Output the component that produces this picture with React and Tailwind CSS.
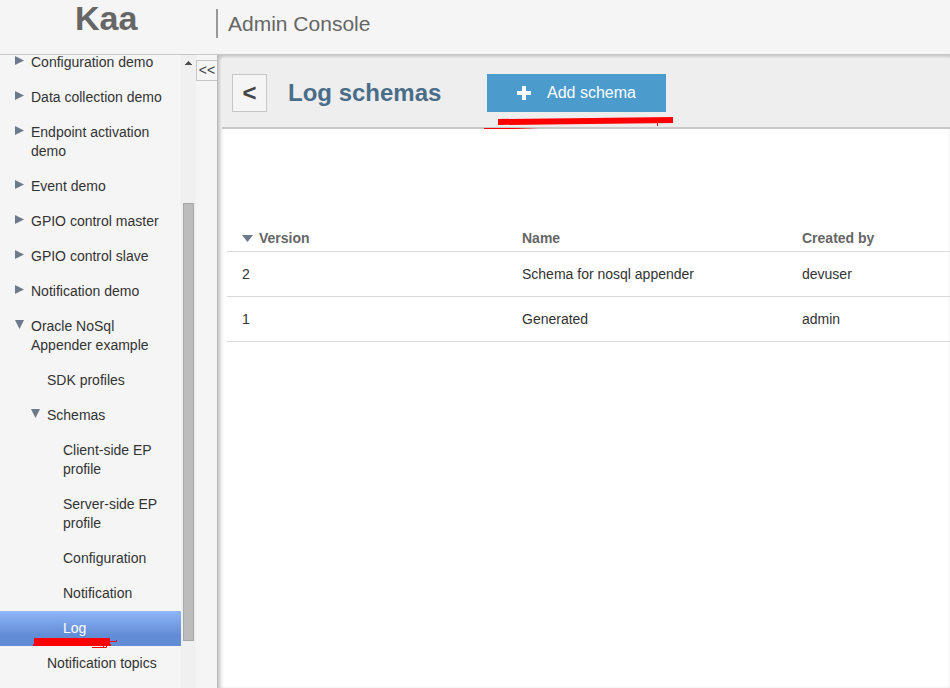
import React from "react";

const NAV = [
  { label: "Configuration demo", level: 0, arrow: "right" },
  { label: "Data collection demo", level: 0, arrow: "right" },
  { label: "Endpoint activation demo", level: 0, arrow: "right" },
  { label: "Event demo", level: 0, arrow: "right" },
  { label: "GPIO control master", level: 0, arrow: "right" },
  { label: "GPIO control slave", level: 0, arrow: "right" },
  { label: "Notification demo", level: 0, arrow: "right" },
  { label: "Oracle NoSql Appender example", level: 0, arrow: "down" },
  { label: "SDK profiles", level: 1 },
  { label: "Schemas", level: 1, arrow: "down" },
  { label: "Client-side EP profile", level: 2 },
  { label: "Server-side EP profile", level: 2 },
  { label: "Configuration", level: 2 },
  { label: "Notification", level: 2 },
  { label: "Log", level: 2, selected: true },
  { label: "Notification topics", level: 1 },
];

const INDENT = ["pl-[15px]", "pl-[31px]", "pl-[47px]"];

const SCHEMAS = [
  { version: 2, name: "Schema for nosql appender", author: "devuser" },
  { version: 1, name: "Generated", author: "admin" },
];

function Arrow({ direction }) {
  return (
    <svg className="block h-[9px] w-[9px]" viewBox="0 0 9 9" aria-hidden="true">
      <path d={direction === "down" ? "M0 0H9L4.5 9Z" : "M0 0L9 4.5L0 9Z"} fill="#6d7a8c" />
    </svg>
  );
}

function NavItem({ item }) {
  return (
    <li>
      <a
        href="#"
        aria-current={item.selected ? "page" : undefined}
        className={`relative flex items-start py-2 pr-4 ${INDENT[item.level]} ${
          item.selected
            ? "bg-linear-to-b from-[#8fb6f7] via-[#628cd5] via-70% to-[#628cd5] text-white"
            : "text-[#333]"
        }`}
      >
        <span className="w-4 shrink-0 pt-[3px]">
          {item.arrow && <Arrow direction={item.arrow} />}
        </span>
        <span>{item.label}</span>
        {item.selected && (
          <svg
            className="pointer-events-none absolute top-[26px] left-8 z-10 h-3 w-[88px]"
            viewBox="0 0 88 12"
            aria-hidden="true"
          >
            <path d="M2 1H78V7H79V9H1V7H2Z" fill="#f00" />
            <path d="M78 4.500H84.500V3M60 10.500H74.500V8M71.500 8V10" fill="none" stroke="#f00" />
          </svg>
        )}
      </a>
    </li>
  );
}

function Sidebar() {
  return (
    <aside className="flex shrink-0">
      <nav aria-label="Projects" className="w-[181px] overflow-hidden">
        <ul className="-mt-[10px] leading-[19px]">
          {NAV.map((item) => (
            <NavItem key={item.label} item={item} />
          ))}
        </ul>
      </nav>
      <div className="flex w-[15px] flex-col items-center bg-[#f0f0f0] pt-[6px] pb-[47px]">
        <svg className="h-1 w-[7px] shrink-0" viewBox="0 0 7 4" aria-hidden="true">
          <path d="M3 0H4V1H5V2H6V3H7V4H0V3H1V2H2V1H3Z" fill="#505050" />
        </svg>
        <div className="mt-[138px] w-[11px] flex-1 border border-[#a8a8a8] bg-[#bcbcbc]" />
      </div>
      <div className="w-[21px] pt-[5px]">
        <button
          type="button"
          aria-label="Collapse navigation"
          className="block h-[21px] w-full border border-r-0 border-[#c7c7c7] text-center leading-[19px] text-[#444]"
        >
          &lt;&lt;
        </button>
      </div>
    </aside>
  );
}

function Toolbar() {
  return (
    <div className="relative flex items-center border-b-2 border-[#c8c8c8] bg-[#eee] px-[10px] py-[15px]">
      <button
        type="button"
        aria-label="Back"
        className="h-[38px] w-[35px] border border-[#c7c7c7] bg-[#f5f5f5] text-2xl font-bold text-[#444]"
      >
        &lt;
      </button>
      <h1 className="ml-[21px] w-[199px] text-2xl font-bold text-[#496d89]">Log schemas</h1>
      <button
        type="button"
        className="flex h-[38px] w-[179px] items-center bg-[#4b9bcd] pl-[30px] text-base text-white"
      >
        <svg className="mr-4 h-[14px] w-[14px]" viewBox="0 0 14 14" aria-hidden="true">
          <path d="M5 0H9V5H14V9H9V14H5V9H0V5H5Z" fill="#fff" />
        </svg>
        Add schema
      </button>
      <svg
        className="pointer-events-none absolute top-[58px] left-[262px] h-[13px] w-[190px]"
        viewBox="0 0 190 13"
        aria-hidden="true"
      >
        <path d="M14 2L189 0V6L105 7L14 8Z" fill="#f00" />
        <path d="M173.500 6V9" stroke="#f00" />
        <path d="M0 11H30L55 11.500L30 12H0Z" fill="#f00" />
      </svg>
    </div>
  );
}

function SchemaTable() {
  return (
    <table className="w-full table-fixed border-collapse text-left text-[#333]">
      <thead>
        <tr className="h-7 border-b border-[#d9d9d9] text-[#666]">
          <th scope="col" className="w-[280px] px-[15px] pt-1 font-bold">
            <span className="flex items-center gap-[6px]">
              <svg className="h-[7px] w-[11px]" viewBox="0 0 11 7" aria-hidden="true">
                <path d="M0 0H11L5.500 7Z" fill="#6d7a8c" />
              </svg>
              Version
            </span>
          </th>
          <th scope="col" className="w-[280px] px-[15px] pt-1 font-bold">Name</th>
          <th scope="col" className="px-[15px] pt-1 font-bold">Created by</th>
        </tr>
      </thead>
      <tbody>
        {SCHEMAS.map((row) => (
          <tr key={row.version} className="h-[45px] border-b border-[#d9d9d9]">
            <td className="px-[15px] pt-0.5">{row.version}</td>
            <td className="px-[15px] pt-0.5">{row.name}</td>
            <td className="px-[15px] pt-0.5">{row.author}</td>
          </tr>
        ))}
      </tbody>
    </table>
  );
}

export default function App() {
  return (
    <div className="flex h-screen flex-col overflow-hidden bg-[#f5f5f5] font-['Liberation_Sans',Arial,sans-serif] text-[14px] leading-[19px]">
      <header className="flex h-[55px] shrink-0 items-start border-b border-[#c7c7c7] text-[#666]">
        <div className="w-[216px] pl-[75px] text-[34px] leading-[36px] font-bold">Kaa</div>
        <div className="mt-[9px] border-l-2 border-[#999] pl-[10px] text-[21px] leading-[29px]">
          Admin Console
        </div>
      </header>
      <div className="flex min-h-0 flex-1">
        <Sidebar />
        <main className="min-w-0 flex-1 border-l border-[#bbb] bg-white pt-1 pl-1 shadow-[inset_2px_2px_4px_#bbb]">
          <Toolbar />
          <div className="pt-[94px] pl-[5px]">
            <SchemaTable />
          </div>
        </main>
      </div>
    </div>
  );
}
